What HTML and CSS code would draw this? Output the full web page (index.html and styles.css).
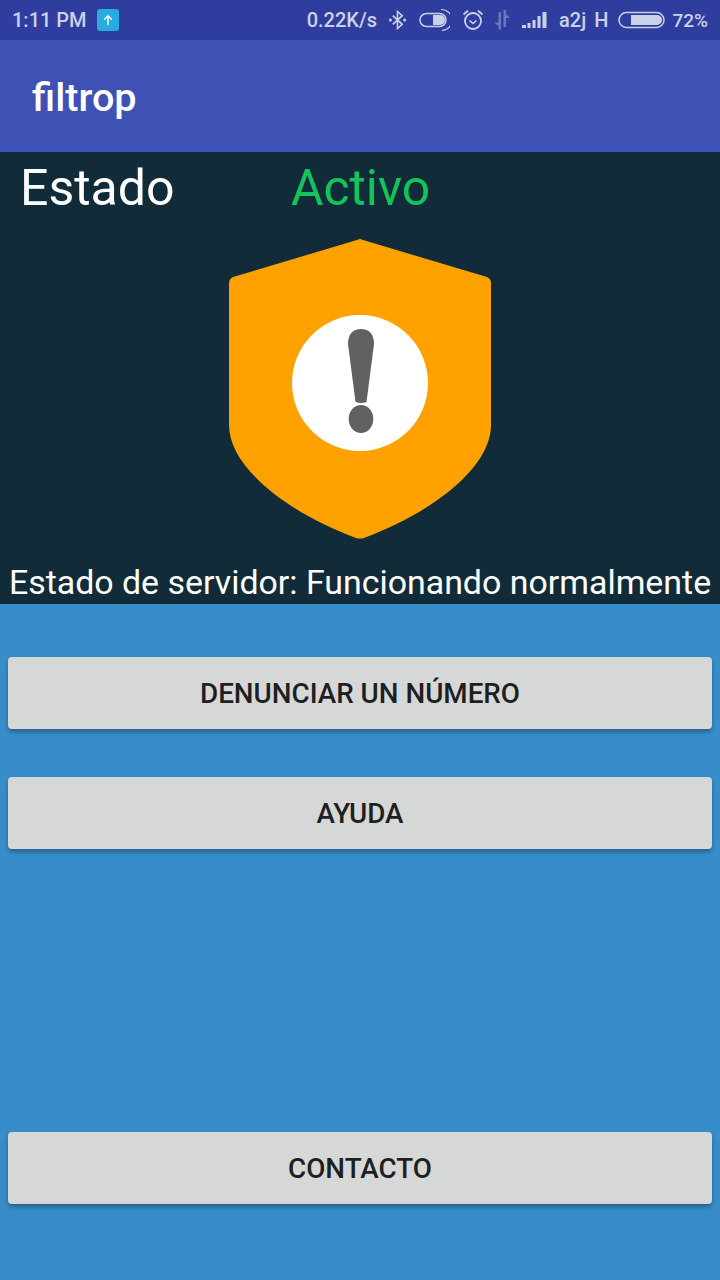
FILE: index.html
```html
<html>

<head>
    <title>filtrop</title>
    <link rel="stylesheet" href="styles.css">
</head>

<body>
    <div class="status-bar">
        <span class="status-text">1:11 PM</span>
        <svg class="upload-icon" width="22" height="22" viewBox="0 0 22 22">
            <rect width="22" height="22" rx="3" fill="#29abe2" />
            <path d="M11 16V7M7.2 10.600L11 6.800l3.800 3.800" fill="none" stroke="#e8f6fc" stroke-width="1.6" />
        </svg>
        <span class="status-right">
            <span class="status-text">0.22K/s</span>
            <svg class="icon-bt" width="19" height="22" viewBox="0 0 20 22">
                <path d="M5 6.500l10 9-5 4.500V2l5 4.500-10 9" fill="none" stroke="#ccd1ea" stroke-width="1.7" />
                <circle cx="2.500" cy="11" r="1.6" fill="#ccd1ea" />
                <circle cx="17.500" cy="11" r="1.6" fill="#ccd1ea" />
            </svg>
            <svg class="icon-switch" width="31" height="24" viewBox="0 0 31 24">
                <rect x="1" y="5.500" width="26" height="13" rx="6.500" fill="none" stroke="#ccd1ea" stroke-width="1.5" />
                <path d="M14 7h7a5 5 0 0 1 0 10h-7z" fill="#ccd1ea" />
                <path d="M22 1.500a10.500 10.500 0 0 1 1 21" fill="none" stroke="#ccd1ea" stroke-width="1.200" />
            </svg>
            <svg class="icon-alarm" width="22" height="24" viewBox="0 0 22 24">
                <circle cx="11" cy="13" r="8" fill="none" stroke="#ccd1ea" stroke-width="1.8" />
                <path d="M7.500 12.500l3.500 3 3.500-3" fill="none" stroke="#ccd1ea" stroke-width="1.6" />
                <path d="M1.500 6.500L6 2.800M20.500 6.500L16 2.800" fill="none" stroke="#ccd1ea" stroke-width="1.8" />
            </svg>
            <svg class="icon-data" width="18" height="22" viewBox="0 0 18 22">
                <path d="M5.500 20.500V3H8v17.500zM1 13.500h4.500V17zM10.500 1v17H13V1zM13 5l4 4h-4z" fill="#6a77b8" />
            </svg>
            <svg class="icon-signal" width="26" height="18" viewBox="0 0 26 18">
                <rect x="0" y="14" width="4" height="3" fill="#ccd1ea" />
                <rect x="5.500" y="12" width="3" height="5" fill="#ccd1ea" />
                <rect x="10.500" y="9" width="3" height="8" fill="#ccd1ea" />
                <rect x="15.500" y="5" width="3" height="12" fill="#ccd1ea" />
                <rect x="20.500" y="1" width="4" height="16" fill="#ccd1ea" />
            </svg>
            <span class="status-text carrier">a2j</span>
            <span class="status-text network">H</span>
            <svg class="icon-battery" width="47" height="18" viewBox="0 0 47 18">
                <rect x="1" y="1.500" width="45" height="15" rx="7.500" fill="none" stroke="#ccd1ea" stroke-width="1.5" />
                <path d="M13 4h26a5 5 0 0 1 0 10H13z" fill="#ccd1ea" />
            </svg>
            <span class="status-text percent">72%</span>
        </span>
    </div>

    <div class="app-bar">
        <h1 class="app-title">filtrop</h1>
    </div>

    <div class="status-panel">
        <div class="state-row">
            <span class="state-label">Estado</span>
            <span class="state-value">Activo</span>
        </div>
        <svg class="shield" width="264" height="302" viewBox="0 0 264 302">
            <path d="M132 1 Q133 1 135 2 L259 39 Q263 41 263 45 L263 187 C263 228 208 273 136 300 Q132 301 128 300 C56 273 1 228 1 187 L1 45 Q1 41 5 39 L129 2 Q131 1 132 1Z" fill="#ffa200" />
            <circle cx="132" cy="145" r="68" fill="#fff" />
            <path d="M120 106 C120 96 125 91 133 91 C141 91 146 96 146 106 L138.500 164 Q133 166 127.500 164Z" fill="#616161" />
            <ellipse cx="133" cy="181" rx="12.300" ry="14" fill="#616161" />
        </svg>
        <p class="server-state">Estado de servidor: Funcionando normalmente</p>
    </div>

    <div class="actions">
        <button class="action-btn">DENUNCIAR UN NÚMERO</button>
        <button class="action-btn">AYUDA</button>
        <button class="action-btn contact-btn">CONTACTO</button>
    </div>
</body>

</html>
```

FILE: styles.css
```css
body {
    margin: 0;
    width: 720px;
    height: 1280px;
    display: flex;
    flex-direction: column;
    overflow: hidden;
    font-family: Roboto, sans-serif;
    background-color: #368dc9;
}

.status-bar {
    height: 40px;
    flex-shrink: 0;
    display: flex;
    align-items: center;
    padding: 0 12px;
    background-color: #2f3e9e;
}

.status-text {
    font-size: 20px;
    font-weight: 500;
    color: #ccd1ea;
}

.upload-icon {
    margin-left: 10px;
}

.status-right {
    margin-left: auto;
    display: flex;
    align-items: center;
}

.icon-bt {
    margin-left: 11px;
}

.icon-switch {
    margin-left: 12px;
}

.icon-alarm {
    margin-left: 12px;
}

.icon-data {
    margin-left: 9px;
}

.icon-signal {
    margin-left: 11px;
}

.carrier {
    margin-left: 11px;
}

.network {
    margin-left: 8px;
}

.icon-battery {
    margin-left: 10px;
}

.percent {
    margin-left: 7px;
    font-size: 19px;
}

.app-bar {
    height: 112px;
    flex-shrink: 0;
    display: flex;
    align-items: center;
    padding: 3px 0 0 32px;
    box-sizing: border-box;
    background-color: #3f51b5;
}

.app-title {
    margin: 0;
    font-size: 39.6px;
    font-weight: 500;
    color: #fff;
}

.status-panel {
    height: 452px;
    flex-shrink: 0;
    display: flex;
    flex-direction: column;
    align-items: center;
    background-color: #112c38;
}

.state-row {
    width: 100%;
    height: 72px;
    display: flex;
    align-items: center;
}

.state-label {
    width: 271px;
    padding-left: 20px;
    font-size: 50px;
    color: #fff;
}

.state-value {
    font-size: 49.8px;
    color: #12c459;
}

.shield {
    margin-top: 14px;
}

.server-state {
    margin: 23px 0 0;
    font-size: 33.9px;
    line-height: 40px;
    white-space: nowrap;
    color: #fff;
}

.actions {
    flex: 1;
    display: flex;
    flex-direction: column;
    gap: 48px;
    padding: 53px 8px 76px;
}

.action-btn {
    height: 72px;
    flex-shrink: 0;
    border: none;
    border-radius: 4px;
    font-family: Roboto, sans-serif;
    font-size: 27.8px;
    font-weight: 500;
    color: #1f1f1f;
    background-color: #d6d7d7;
    box-shadow: 0 3px 4px rgba(0, 0, 0, 0.3);
}

.contact-btn {
    margin-top: auto;
}
```
